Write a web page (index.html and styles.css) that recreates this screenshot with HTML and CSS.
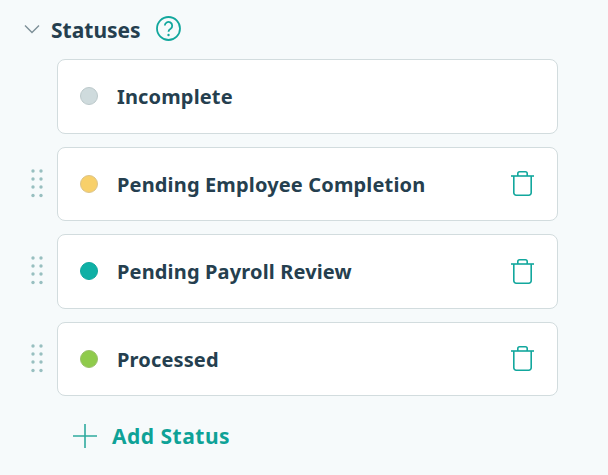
FILE: index.html
```html
<!DOCTYPE html>
<html lang="en">
<head>
<meta charset="utf-8">
<title>Statuses</title>
<link rel="stylesheet" href="styles.css">
</head>
<body>
<svg class="defs" width="0" height="0" aria-hidden="true">
  <symbol id="grip" viewBox="0 0 14 32"><g fill="#98bfc0"><circle cx="3" cy="3" r="1.7"/><circle cx="11" cy="3" r="1.7"/><circle cx="3" cy="11" r="1.7"/><circle cx="11" cy="11" r="1.7"/><circle cx="3" cy="19" r="1.7"/><circle cx="11" cy="19" r="1.7"/><circle cx="3" cy="27.5" r="1.7"/><circle cx="11" cy="27.5" r="1.7"/></g></symbol>
  <symbol id="trash" viewBox="0 0 23 25"><g fill="none" stroke="#12a79d" stroke-width="1.6"><path d="M0 5h23"/><path d="M2.8 5v16.8a2.4 2.4 0 0 0 2.4 2.4h12.6a2.4 2.4 0 0 0 2.4-2.4V5"/><path d="M6.8 5V2.6a1.8 1.8 0 0 1 1.8-1.8h5.8a1.8 1.8 0 0 1 1.8 1.8V5"/></g></symbol>
</svg>
<section class="panel">
  <header class="head">
    <svg class="chevron" width="16" height="10" viewBox="0 0 16 10"><path d="M1 1.5l7 7 7-7" fill="none" stroke="#7d8f97" stroke-width="1.4"/></svg>
    <h2 class="title">Statuses</h2>
    <svg class="help" width="25" height="25" viewBox="0 0 25 25"><circle cx="12.5" cy="12.5" r="11.5" fill="none" stroke="#12a79d" stroke-width="1.8"/><path d="M8.8 9.6a3.7 3.7 0 1 1 5.8 3.1c-1.4.9-2.1 1.5-2.1 3" fill="none" stroke="#12a79d" stroke-width="1.8"/><circle cx="12.5" cy="19" r="1.2" fill="#12a79d"/></svg>
  </header>
  <ul class="list">
    <li class="row">
      <span class="grip"></span>
      <div class="card"><span class="dot grey"></span><span class="name">Incomplete</span></div>
    </li>
    <li class="row">
      <span class="grip"><svg width="14" height="32"><use href="#grip"/></svg></span>
      <div class="card"><span class="dot yellow"></span><span class="name">Pending Employee Completion</span>
        <svg class="trash" width="23" height="25"><use href="#trash"/></svg>
      </div>
    </li>
    <li class="row">
      <span class="grip"><svg width="14" height="32"><use href="#grip"/></svg></span>
      <div class="card"><span class="dot teal"></span><span class="name">Pending Payroll Review</span>
        <svg class="trash" width="23" height="25"><use href="#trash"/></svg>
      </div>
    </li>
    <li class="row">
      <span class="grip"><svg width="14" height="32"><use href="#grip"/></svg></span>
      <div class="card"><span class="dot green"></span><span class="name">Processed</span>
        <svg class="trash" width="23" height="25"><use href="#trash"/></svg>
      </div>
    </li>
  </ul>
  <button class="add" type="button">
    <svg width="24" height="24" viewBox="0 0 24 24"><path d="M12 0v24M0 12h24" fill="none" stroke="#2fab9f" stroke-width="1.6"/></svg>
    <span>Add Status</span>
  </button>
</section>
</body>
</html>
```

FILE: styles.css
```css
* { box-sizing: border-box; }
html, body { margin: 0; height: 100%; }
body {
  background: #f6fafb;
  font-family: "Noto Sans", sans-serif;
  color: #253f4f;
  overflow: hidden;
}
.defs { position: absolute; }
.panel { padding: 16px 50px 0 24px; }
.head { display: flex; align-items: center; height: 28px; }
.chevron { margin-right: 11px; margin-top: -2px; }
.title { margin: 0 15px 0 0; font-size: 21px; font-weight: 700; line-height: 28px; }
.help { margin-top: -3px; }
.list { list-style: none; margin: 15px 0 0; padding: 0; display: flex; flex-direction: column; gap: 13px; }
.row { display: flex; align-items: center; }
.grip { width: 33px; flex: none; display: flex; padding-left: 6px; }
.card {
  flex: 1;
  height: 74.5px;
  display: flex;
  align-items: center;
  background: #fff;
  border: 1px solid #d2dcde;
  border-radius: 8px;
  padding: 0 23px 0 22px;
}
.dot { width: 18px; height: 18px; border-radius: 50%; border: 1px solid; flex: none; margin-right: 19px; }
.grey { background: #cfdbdd; border-color: #bcc9cb; }
.yellow { background: #f8d06a; border-color: #dcc48a; }
.teal { background: #0fb0a5; border-color: #0fa79d; }
.green { background: #8fcb4b; border-color: #9bc06a; }
.name { font-size: 20px; font-weight: 700; flex: 1; letter-spacing: 0.15px; padding-top: 1px; }
.add {
  display: flex;
  align-items: center;
  gap: 15px;
  margin: 26px 0 0 49px;
  padding: 0;
  border: 0;
  background: none;
  font: 700 21px "Noto Sans", sans-serif;
  letter-spacing: 0.5px;
  color: #0ea297;
}
```
